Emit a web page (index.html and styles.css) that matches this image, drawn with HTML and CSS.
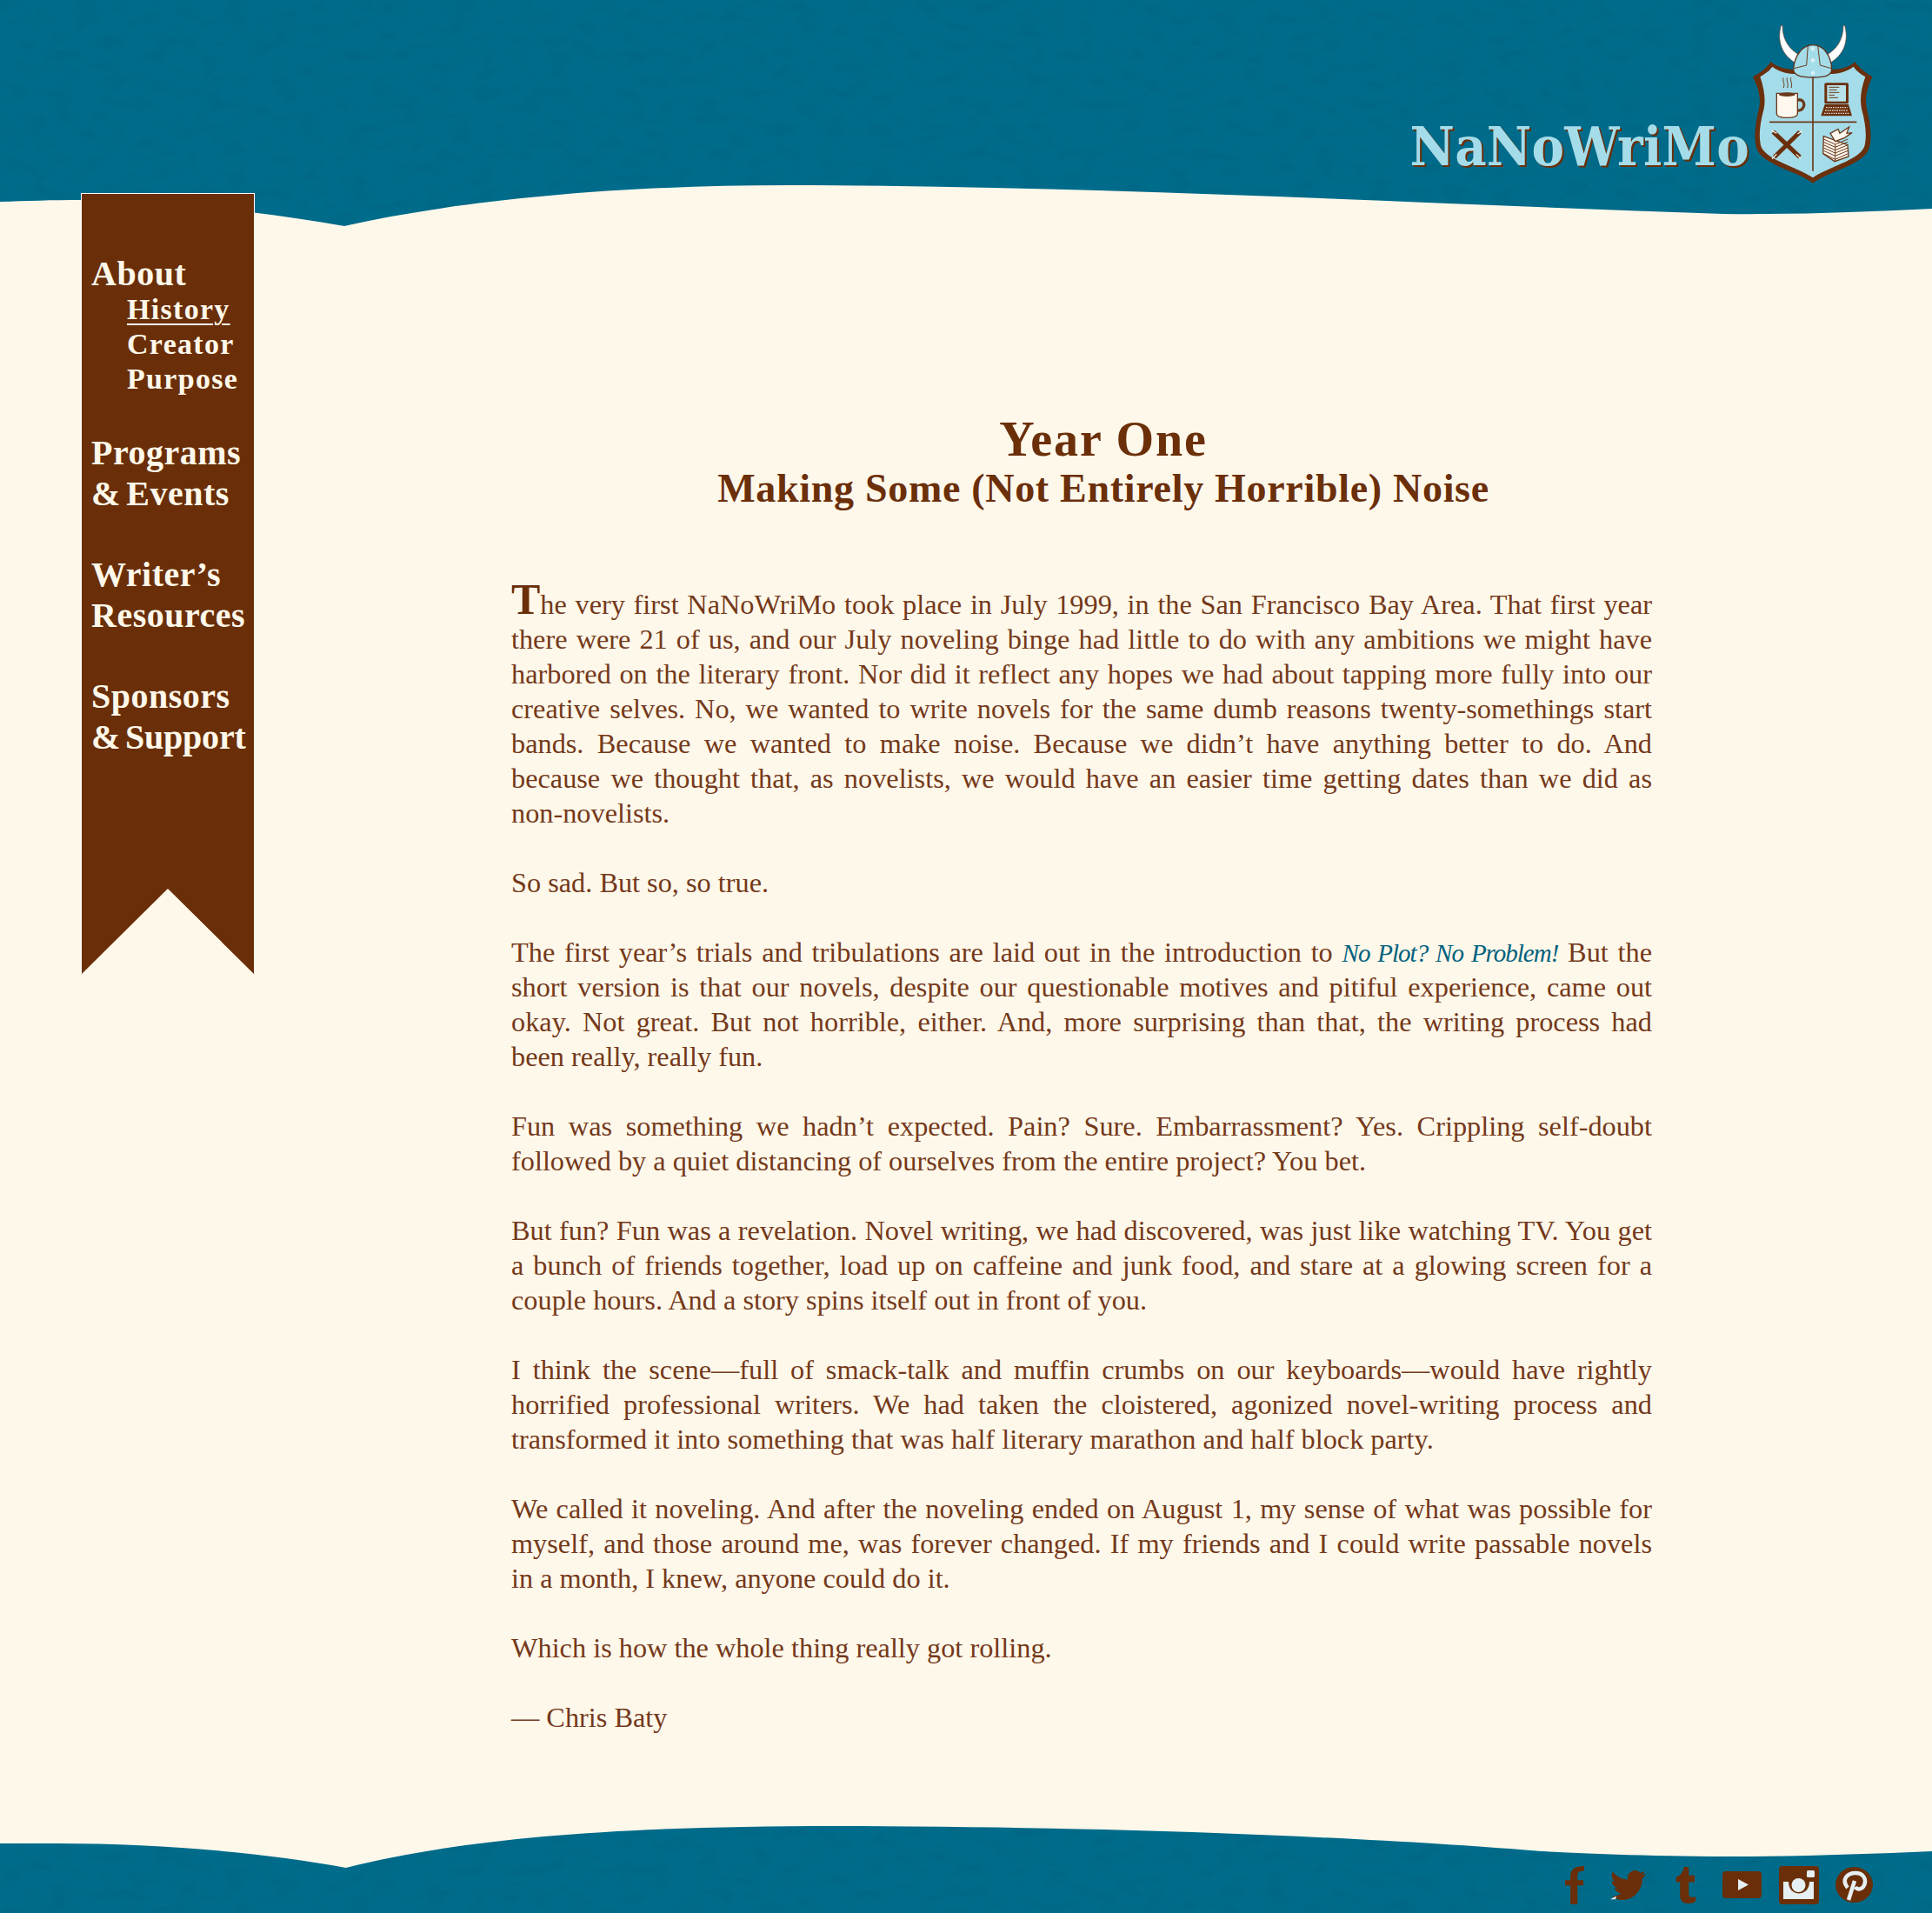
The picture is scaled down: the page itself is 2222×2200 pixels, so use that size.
FILE: index.html
```html
<!DOCTYPE html>
<html lang="en">
<head>
<meta charset="utf-8">
<title>NaNoWriMo – History</title>
<link rel="stylesheet" href="styles.css">
</head>
<body>
<div class="page">
  <svg class="waves" viewBox="0 0 2222 2200" aria-hidden="true">
    <defs>
      <filter id="paper" x="0" y="0" width="100%" height="100%">
        <feTurbulence type="fractalNoise" baseFrequency="0.035 0.07" numOctaves="3" seed="4"/>
        <feColorMatrix type="matrix" values="0 0 0 0 0  0 0 0 0 0.12  0 0 0 0 0.2  0.9 0 0 0 -0.33"/>
      </filter>
    </defs>
    <rect class="wave-teal" width="2222" height="2200"/>
    <rect width="2222" height="2200" filter="url(#paper)"/>
    <path class="wave-cream" d="M0 232 C30 231 60 230 94 230 C200 232 300 243 396 260 C520 232 700 213 907 213 C1250 213 1650 235 1982 246 C2060 247 2140 244 2222 240 L2222 2129 C2150 2132 2070 2135 2000 2135 C1900 2135 1800 2131 1760 2128 C1600 2115 1300 2100 960 2100 C700 2100 530 2115 398 2148 C300 2130 180 2120 66 2120 L0 2120 Z"/>
  </svg>

  <header class="masthead">
    <div class="logo-word">NaNoWriMo</div>
    <svg class="crest" viewBox="0 0 540 600" role="img" aria-label="NaNoWriMo crest">
      <path class="c-horn" d="M175 28 C160 85 180 130 224 157 L238 130 C205 110 180 80 180 28Z"/>
      <path class="c-horn" d="M395 28 C410 85 390 130 345 157 L335 128 C365 110 390 80 390 28Z"/>
      <path class="c-brown" d="M78 205 C105 190 125 175 140 153 C165 175 200 180 225 180 L345 180 C375 180 410 175 430 153 C445 175 465 190 490 205 C470 250 465 280 470 310 C485 370 490 420 478 455 C455 510 340 530 285 572 C230 530 115 510 92 455 C80 420 85 370 100 310 C105 280 100 250 78 205Z"/>
      <path class="c-blue" d="M103 205 C120 195 135 185 145 170 C170 190 205 195 225 195 L345 195 C365 195 400 190 425 170 C435 185 450 195 466 205 C450 250 447 285 453 315 C468 370 472 415 462 448 C440 495 340 515 285 553 C230 515 130 495 107 448 C97 415 101 370 116 315 C122 285 118 250 103 205Z"/>
      <path class="c-line" d="M285 205 V530 M135 361 H436"/>
      <path class="c-helm" d="M218 178 C222 130 250 95 285 95 C320 95 348 130 350 178 C350 200 330 207 285 207 C240 207 218 200 218 178Z"/>
      <path class="c-thin" d="M268 98 L263 165 L220 176 M302 98 L310 165 L349 176"/>
      <circle class="c-rivet" cx="285" cy="108" r="6"/><circle class="c-rivet" cx="285" cy="148" r="6"/><circle class="c-rivet" cx="285" cy="192" r="6"/>
      <path class="c-thin" d="M184 208 C178 218 190 225 184 243 M197 208 C191 218 203 225 197 243 M210 208 C204 218 216 225 210 243"/>
      <path class="c-white" d="M160 262 H232 V332 C232 342 222 346 196 346 C170 346 160 342 160 332Z"/>
      <ellipse class="c-fill" cx="196" cy="266" rx="28" ry="7"/>
      <path class="c-handle" d="M232 285 C262 278 262 322 232 322"/>
      <rect class="c-brown" x="325" y="226" width="83" height="72" rx="5"/>
      <rect class="c-blue2" x="334" y="234" width="65" height="56"/>
      <path class="c-thin" d="M340 241 H376 M340 250 H368 M340 259 H376 M340 268 H360 M340 277 H372"/>
      <path class="c-brown" d="M326 300 H408 L420 340 H313Z"/>
      <path class="c-keys" d="M330 311 H404 M327 321 H407 M324 331 H410"/>
      <path class="c-pen" d="M148 395 L240 482 M240 395 L152 482"/>
      <path class="c-tip" d="M142 390 L160 400 M248 392 L232 402 M144 488 L160 472 M243 488 L228 472"/>
      <path class="c-white" d="M322 410 L405 440 L408 480 L360 497 L320 470Z"/>
      <path class="c-thin" d="M322 420 L362 438 L406 420 M322 430 L362 448 L406 430 M322 440 L362 458 L406 440 M322 450 L362 468 L406 450 M322 460 L362 478 L406 460 M322 470 L362 490 L406 470 M362 438 V496"/>
      <path class="c-white" d="M345 400 L372 385 L378 400 L410 378 L402 400 L420 398 L395 415 L362 428Z"/>
    </svg>
  </header>

  <div class="body-row">
    <nav class="ribbon">
      <div class="nav-group nav-group-subs">
        <a class="nav-top nav-head">About</a>
        <a class="nav-sub current">History</a>
        <a class="nav-sub">Creator</a>
        <a class="nav-sub">Purpose</a>
      </div>
      <div class="nav-group"><a class="nav-top">Programs<br>&amp; Events</a></div>
      <div class="nav-group"><a class="nav-top">Writer’s<br>Resources</a></div>
      <div class="nav-group"><a class="nav-top">Sponsors<br><span class="nav-tight">&amp; Support</span></a></div>
    </nav>

    <main class="article">
      <h1 class="title">Year One</h1>
      <h2 class="subtitle">Making Some (Not Entirely Horrible) Noise</h2>
      <p class="first"><span class="drop">T</span>he very first NaNoWriMo took place in July 1999, in the San Francisco Bay Area. That first year there were 21 of us, and our July noveling binge had little to do with any ambitions we might have harbored on the literary front. Nor did it reflect any hopes we had about tapping more fully into our creative selves. No, we wanted to write novels for the same dumb reasons twenty-somethings start bands. Because we wanted to make noise. Because we didn’t have anything better to do. And because we thought that, as novelists, we would have an easier time getting dates than we did as <span class="nb">non-novelists.</span></p>
      <p>So sad. But so, so true.</p>
      <p>The first year’s trials and tribulations are laid out in the introduction to <a class="book">No Plot? No Problem!</a> But the short version is that our novels, despite our questionable motives and pitiful experience, came out okay. Not great. But not horrible, either. And, more surprising than that, the writing process had been&nbsp;really, really fun.</p>
      <p>Fun was something we hadn’t expected. Pain? Sure. Embarrassment? Yes. Crippling self-doubt followed by a quiet distancing of ourselves from the entire project? You bet.</p>
      <p>But fun? Fun was a revelation. Novel writing, we had discovered, was just like watching TV. You get a bunch of friends together, load up on caffeine and junk food, and stare at a glowing screen for a couple hours. And a story spins itself out in front of you.</p>
      <p>I think the scene—full of smack-talk and muffin crumbs on our keyboards—would have rightly horrified professional writers. We had taken the cloistered, agonized novel-writing process and transformed it into something that was half literary marathon and half block party.</p>
      <p>We called it noveling. And after the noveling ended on August 1, my sense of what was possible for myself, and those around me, was forever changed. If my friends and I could write passable novels in&nbsp;a month, I knew, anyone could do it.</p>
      <p>Which is how the whole thing really got rolling.</p>
      <p>— Chris Baty</p>
    </main>
  </div>

  <footer class="social">
    <svg class="ico ico-f" viewBox="0 0 65 130"><path d="M18 48 V36 C18 10 35 0 65 0 V16 C50 16 42 20 42 36 V48 H62 V66 H42 V130 H18 V66 H0 V48Z"/></svg>
    <svg class="ico ico-tw" viewBox="0 0 24 20"><path d="M24 2.4a10 10 0 0 1-2.8.8 5 5 0 0 0 2.1-2.7c-.95.55-2 .96-3.1 1.18a4.92 4.92 0 0 0-8.4 4.48C7.7 5.95 4.07 4 1.64 1 1 2 .97 3 .97 3.5c0 1.7.87 3.2 2.2 4.1a4.9 4.9 0 0 1-2.23-.62v.06a4.92 4.92 0 0 0 3.95 4.83 5 5 0 0 1-2.2.08 4.94 4.94 0 0 0 4.6 3.42A9.87 9.87 0 0 1 1.2 17.5c1 .9 3.8 2.5 6.4 2.5 9.05 0 14-7.5 14-14 0-.2 0-.4-.02-.63A10 10 0 0 0 24 2.4z"/><path class="ico-cut" d="M0 19.5 L4 17.5 L3.4 19.6Z"/></svg>
    <svg class="ico ico-t" viewBox="0 0 70 130"><path d="M28 0 H45 V30 H66 V54 H45 V95 C45 108 55 110 70 106 V122 C60 130 50 130 40 130 C22 130 14 118 14 100 V54 H0 V36 C14 32 24 20 28 0Z"/></svg>
    <svg class="ico ico-yt" viewBox="0 0 45 31"><rect width="45" height="31" rx="4"/><path class="ico-light" d="M18 9 L30 15.500 L18 22Z"/></svg>
    <svg class="ico ico-ig" viewBox="0 0 46 44"><rect width="46" height="44" rx="4"/><path class="ico-light" d="M5 18 H11 C11 36 35 36 35 18 H40 V38 H5Z"/><rect class="ico-light" x="32" y="5" width="9" height="8" rx="1.5"/><circle class="ico-light" cx="22.500" cy="22" r="8"/></svg>
    <svg class="ico ico-pin" viewBox="0 0 43 41"><ellipse cx="21.500" cy="20.500" rx="21.500" ry="20.500"/><path class="ico-stroke" d="M14 24 C6 14 14 7 23 7 C32 7 36 14 33 21 C31 26 25 27 23 23 M22 16 L15 38"/></svg>
  </footer>
</div>
</body>
</html>
```
FILE: styles.css
```css
* { box-sizing: border-box; }
html, body { margin: 0; padding: 0; }
body { background: #fef8ea; font-family: "Liberation Serif", "Times New Roman", serif; color: #6b2f0a; }
.page { position: relative; width: 2222px; height: 2200px; display: flex; flex-direction: column; overflow: hidden; }
.waves { position: absolute; left: 0; top: 0; width: 2222px; height: 2200px; }
.wave-teal { fill: #006c8c; }
.wave-cream { fill: #fef8ea; }

.masthead { position: relative; height: 222px; display: flex; justify-content: flex-end; align-items: flex-start; padding-right: 52px; }
.logo-word { margin-top: 132px; font-family: "DejaVu Serif", serif; font-stretch: condensed; font-weight: 700; font-size: 62.5px; line-height: 72px; letter-spacing: 0.3px; color: #a5dce9; text-shadow: 2px 2px 0 #6a2f08; }
.crest { width: 180px; height: 200px; margin: 20px 0 0 -22px; }
.c-horn { fill: #fff; stroke: #6a4030; stroke-width: 2; }
.c-brown { fill: #6a2f0c; }
.c-blue { fill: #a5dce9; }
.c-blue2 { fill: #b9e3ea; }
.c-line { fill: none; stroke: #6a3a1c; stroke-width: 5; }
.c-helm { fill: #a5dce9; stroke: #5a3520; stroke-width: 4; }
.c-thin { fill: none; stroke: #6a3a1c; stroke-width: 3; }
.c-rivet { fill: #d8f0f5; stroke: #fff; stroke-width: 1; }
.c-white { fill: #fff8ee; stroke: #6a3a1c; stroke-width: 4; }
.c-fill { fill: #6a3a1c; }
.c-handle { fill: none; stroke: #6a3a1c; stroke-width: 10; }
.c-keys { fill: none; stroke: #d9d2c5; stroke-width: 4; stroke-dasharray: 5 3; }
.c-pen { fill: none; stroke: #6a2f0c; stroke-width: 15; }
.c-tip { fill: none; stroke: #f2ece0; stroke-width: 4; }

.body-row { position: relative; display: flex; align-items: flex-start; padding-left: 93px; }

.ribbon { flex: none; width: 200px; height: 899px; padding: 68px 0 0 11px; background: #6a2f08; border: 1px solid #fff; border-bottom: 0; clip-path: polygon(0 0, 100% 0, 100% 100%, 50% 800px, 0 100%); color: #fef8ea; }
.nav-group { margin-bottom: 46px; }
.nav-group-subs { margin-bottom: 41px; }
.nav-top { display: block; font-weight: 700; font-size: 40px; line-height: 47px; letter-spacing: 0.5px; word-spacing: -4px; white-space: nowrap; }
.nav-tight { letter-spacing: -0.2px; }
.nav-head { margin-bottom: -2px; }
.nav-sub { display: block; width: fit-content; margin-left: 41px; font-weight: 700; font-size: 34px; line-height: 40px; letter-spacing: 1.3px; }
.current { text-decoration: underline; text-decoration-thickness: 2px; text-underline-offset: 5px; }

.article { flex: none; width: 1312px; margin-left: 295px; padding-top: 251px; font-size: 32.3px; line-height: 40px; color: #74391a; }
.title { margin: 0; padding-left: 50px; text-align: center; font-size: 56px; line-height: 64px; letter-spacing: 1.9px; font-weight: 700; color: #6b2f0a; }
.subtitle { margin: 0 0 82px; padding-left: 50px; text-align: center; font-size: 46px; line-height: 50px; letter-spacing: 0.7px; font-weight: 700; color: #6b2f0a; }
.article p { margin: 0 0 40px; text-align: justify; }
.drop { font-size: 50px; font-weight: 700; line-height: 40px; color: #6b2f0a; }
.nb { white-space: nowrap; }
.book { font-style: italic; font-size: 29px; line-height: 1; letter-spacing: -1px; color: #00607c; }

.social { position: relative; margin-top: auto; height: 55px; display: flex; align-items: center; justify-content: flex-end; padding: 0 68px 10px 0; gap: 24px; }
.ico { display: block; fill: #6a2f08; }
.ico-f { width: 22px; height: 44px; margin-right: 4px; }
.ico-tw { width: 45px; height: 34px; }
.ico-t { width: 24px; height: 42px; margin-left: 8px; margin-right: 6px; }
.ico-yt { width: 45px; height: 31px; }
.ico-ig { width: 46px; height: 44px; margin-left: -4px; }
.ico-pin { width: 43px; height: 41px; margin-left: -5px; }
.ico-light { fill: #e6eff2; }
.ico-cut { fill: #fff; }
.ico-stroke { fill: none; stroke: #e6eff2; stroke-width: 4.5; }
```
